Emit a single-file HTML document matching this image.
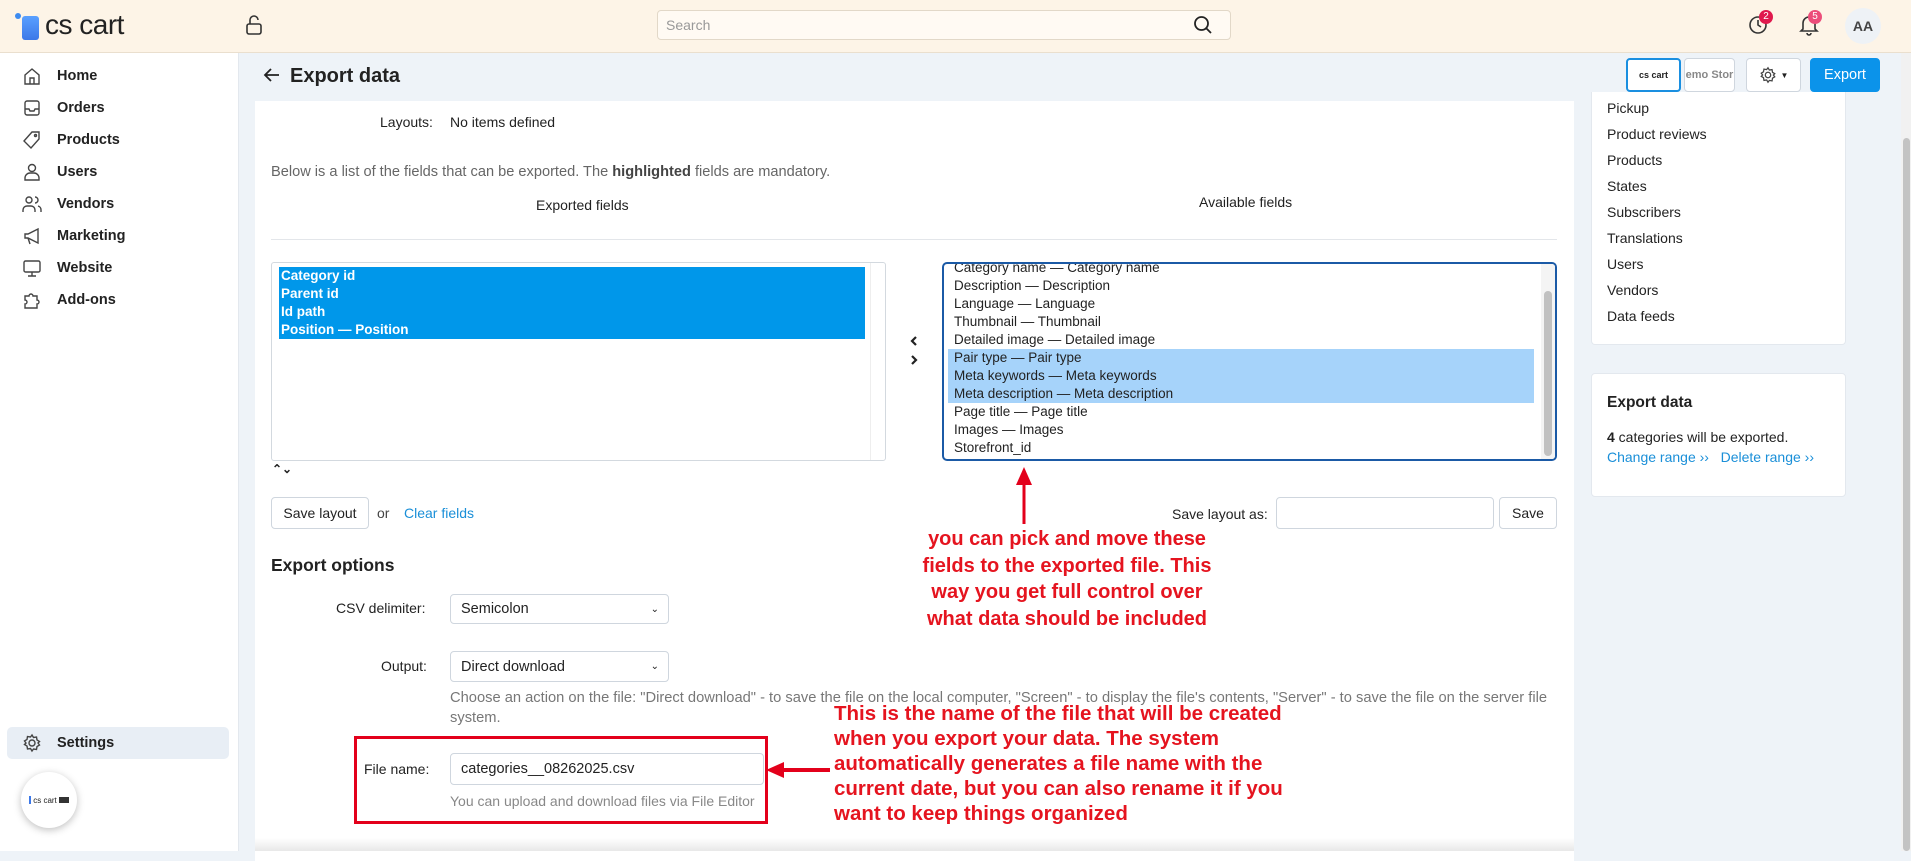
<!DOCTYPE html>
<html><head><meta charset="utf-8"><style>
*{box-sizing:border-box;margin:0;padding:0}
body{width:1911px;height:851px;overflow:hidden;background:#eef3f8;font-family:"Liberation Sans",sans-serif;font-size:13px;color:#222;position:relative}
.a{position:absolute}
.hdr{left:0;top:0;width:1911px;height:53px;background:#fdf4e7;border-bottom:1px solid #eadfce}
.side{left:0;top:53px;width:239px;height:798px;background:#fff;border-right:1px solid #e3e8ee}
.mi{position:absolute;left:0;width:239px;height:32px;display:flex;align-items:center;font-size:14.5px;font-weight:bold;color:#222}
.mi svg{position:absolute;left:22px}
.mi span{position:absolute;left:57px}
.panel{left:255px;top:101px;width:1319px;height:760px;background:#fff}
.rp{background:#fff;border:1px solid #e3e8ee;border-radius:4px}
.btn{background:#fff;border:1px solid #cfd6de;border-radius:4px;display:flex;align-items:center;justify-content:center;font-size:14px}
.inp{background:#fff;border:1px solid #cfd6de;border-radius:4px;font-size:14.5px;display:flex;align-items:center;padding-left:10px}
.red{color:#e5141f;font-weight:bold;font-size:20px;line-height:26px}
.rowL{height:18px;line-height:18px;padding-left:2px;font-weight:bold;color:#fff;font-size:13.5px}
.rowR{height:18px;line-height:18px;padding-left:6px;font-size:13.5px;color:#222}
</style></head><body>
<div class="a hdr">
 <div class="a" style="left:15px;top:13px;width:6px;height:6px;border-radius:50%;background:#3d8bf0"></div>
 <div class="a" style="left:22px;top:16px;width:17px;height:24px;border-radius:3px;background:linear-gradient(#5aa0ff,#3c78e8)"></div>
 <div class="a" style="left:45px;top:9px;font-size:28px;color:#222;letter-spacing:-0.5px">cs cart</div>
 <svg class="a" style="left:245px;top:14px" width="18" height="22" viewBox="0 0 18 22" fill="none" stroke="#333" stroke-width="1.6"><rect x="2" y="10" width="14" height="10" rx="2"/><path d="M5 10V6a4 4 0 0 1 8 0"/></svg>
 <div class="a inp" style="left:657px;top:10px;width:574px;height:30px;color:#999;font-size:14px;padding-left:8px;border-color:#e2d8c8;background:#fffaf3">Search</div>
 <svg class="a" style="left:1193px;top:15px" width="20" height="20" viewBox="0 0 20 20" fill="none" stroke="#222" stroke-width="1.8"><circle cx="8.5" cy="8.5" r="6.5"/><path d="M13.5 13.5L18 18"/></svg>
 <svg class="a" style="left:1748px;top:15px" width="20" height="20" viewBox="0 0 20 20" fill="none" stroke="#333" stroke-width="1.6"><circle cx="10" cy="10" r="8"/><path d="M10 5v5l3 2"/></svg>
 <div class="a" style="left:1759px;top:10px;width:14px;height:14px;border-radius:50%;background:#e0194d;color:#fff;font-size:10px;text-align:center;line-height:14px">2</div>
 <svg class="a" style="left:1799px;top:14px" width="20" height="22" viewBox="0 0 20 22" fill="none" stroke="#333" stroke-width="1.6"><path d="M4 15V9a6 6 0 0 1 12 0v6l2 2H2z"/><path d="M8 19a2 2 0 0 0 4 0"/></svg>
 <div class="a" style="left:1808px;top:10px;width:14px;height:14px;border-radius:50%;background:#ec4d7a;color:#fff;font-size:10px;text-align:center;line-height:14px">5</div>
 <div class="a" style="left:1845px;top:8px;width:36px;height:36px;border-radius:50%;background:#eef2f6;color:#444;font-size:14px;font-weight:bold;text-align:center;line-height:36px">AA</div>
</div>
<div class="a side">
 <div class="mi" style="top:7px"><svg width="20" height="20" viewBox="0 0 20 20" fill="none" stroke="#444" stroke-width="1.4"><path d="M3 9l7-6 7 6v9H3z"/><path d="M8 18v-6h4v6"/></svg><span>Home</span></div>
 <div class="mi" style="top:39px"><svg width="20" height="20" viewBox="0 0 20 20" fill="none" stroke="#444" stroke-width="1.4"><rect x="3" y="3" width="14" height="14" rx="2"/><path d="M3 11h4l1 2h4l1-2h4"/></svg><span>Orders</span></div>
 <div class="mi" style="top:71px"><svg width="20" height="20" viewBox="0 0 20 20" fill="none" stroke="#444" stroke-width="1.4"><path d="M10 2h7v7l-8 9-7-7z"/><circle cx="13.5" cy="5.5" r="1"/></svg><span>Products</span></div>
 <div class="mi" style="top:103px"><svg width="20" height="20" viewBox="0 0 20 20" fill="none" stroke="#444" stroke-width="1.4"><circle cx="10" cy="6" r="3.5"/><path d="M3 18v-2a5 5 0 0 1 5-5h4a5 5 0 0 1 5 5v2z"/></svg><span>Users</span></div>
 <div class="mi" style="top:135px"><svg width="20" height="20" viewBox="0 0 20 20" fill="none" stroke="#444" stroke-width="1.4"><circle cx="7" cy="6" r="3"/><path d="M1 18v-2a4 4 0 0 1 4-4h4a4 4 0 0 1 4 4v2M13 3a3 3 0 0 1 0 6M16 12a4 4 0 0 1 3 4v2"/></svg><span>Vendors</span></div>
 <div class="mi" style="top:167px"><svg width="20" height="20" viewBox="0 0 20 20" fill="none" stroke="#444" stroke-width="1.4"><path d="M3 8h3l10-5v14L6 12H3z"/><path d="M6 12l2 6"/></svg><span>Marketing</span></div>
 <div class="mi" style="top:199px"><svg width="20" height="20" viewBox="0 0 20 20" fill="none" stroke="#444" stroke-width="1.4"><rect x="2" y="3" width="16" height="11" rx="1.5"/><path d="M10 14v4M6 18h8"/></svg><span>Website</span></div>
 <div class="mi" style="top:231px"><svg width="20" height="20" viewBox="0 0 20 20" fill="none" stroke="#444" stroke-width="1.4"><path d="M3 6h4a2 2 0 1 1 4 0h4v4a2 2 0 1 1 0 4v4H3v-4a2 2 0 1 0 0-4z"/></svg><span>Add-ons</span></div>
 <div class="a" style="left:7px;top:674px;width:222px;height:32px;background:#e8eef5;border-radius:5px"></div>
 <div class="mi" style="top:674px"><svg width="20" height="20" viewBox="0 0 20 20" fill="none" stroke="#444" stroke-width="1.4"><circle cx="10" cy="10" r="3"/><path d="M10 2l1.5 2.5 3-.5.5 3L17.5 8.5 16 10l1.5 2-2.5 1.5-.5 3-3-.5L10 18l-1.5-2.5-3 .5-.5-3L2.5 11.5 4 10 2.5 8l2.5-1.5.5-3 3 .5z"/></svg><span>Settings</span></div>
 <div class="a" style="left:21px;top:719px;width:56px;height:56px;border-radius:50%;background:#fff;box-shadow:0 2px 8px rgba(0,0,0,.25);font-size:8px;display:flex;align-items:center;justify-content:center"><span style="display:inline-block;width:2px;height:8px;background:#3c78e8;margin-right:2px"></span>cs cart <span style="display:inline-block;width:10px;height:6px;background:#333;margin-left:2px"></span></div>
</div>
<svg class="a" style="left:263px;top:67px" width="18" height="16" viewBox="0 0 18 16" fill="none" stroke="#222" stroke-width="1.8"><path d="M16 8H2M8 2L2 8l6 6"/></svg>
<div class="a" style="left:290px;top:65px;font-size:20px;font-weight:bold;color:#222">Export data</div>
<div class="a btn" style="left:1626px;top:58px;width:55px;height:34px;border:2px solid #1a8fe0;font-size:9px;font-weight:bold">cs cart</div>
<div class="a btn" style="left:1684px;top:58px;width:51px;height:34px;font-size:11px;color:#888;font-weight:bold;overflow:hidden">emo Stor</div>
<div class="a btn" style="left:1746px;top:58px;width:55px;height:34px">
 <svg width="18" height="18" viewBox="0 0 20 20" fill="none" stroke="#444" stroke-width="1.4"><circle cx="10" cy="10" r="3"/><path d="M10 2l1.5 2.5 3-.5.5 3L17.5 8.5 16 10l1.5 2-2.5 1.5-.5 3-3-.5L10 18l-1.5-2.5-3 .5-.5-3L2.5 11.5 4 10 2.5 8l2.5-1.5.5-3 3 .5z"/></svg><span style="font-size:8px;margin-left:4px">▼</span></div>
<div class="a btn" style="left:1810px;top:58px;width:70px;height:34px;background:#0b93ea;border-color:#0b93ea;color:#fff;font-size:14.5px">Export</div>

<div class="a panel"></div>
<div class="a rp" style="left:1591px;top:92px;width:255px;height:253px;border-top:none;border-radius:0 0 4px 4px"></div>
<div class="a" style="left:1607px;top:95px;font-size:14px;line-height:26px;color:#222">Pickup<br>Product reviews<br>Products<br>States<br>Subscribers<br>Translations<br>Users<br>Vendors<br>Data feeds</div>
<div class="a rp" style="left:1591px;top:373px;width:255px;height:124px"></div>
<div class="a" style="left:1607px;top:394px;font-size:15.5px;font-weight:bold">Export data</div>
<div class="a" style="left:1607px;top:429px;font-size:14px"><b>4</b> categories will be exported.</div>
<div class="a" style="left:1607px;top:449px;font-size:14px;color:#1a8fd8">Change range ›› &nbsp;&nbsp;Delete range ››</div>
<div class="a" style="left:1901px;top:53px;width:10px;height:798px;background:#f1f1f1"></div>
<div class="a" style="left:1903px;top:138px;width:7px;height:713px;background:#c3c3c3;border-radius:4px"></div>

<div class="a" style="left:380px;top:114px;font-size:14px">Layouts:</div>
<div class="a" style="left:450px;top:114px;font-size:14px">No items defined</div>
<div class="a" style="left:271px;top:164px;font-size:14.6px;color:#666">Below is a list of the fields that can be exported. The <b style="color:#444">highlighted</b> fields are mandatory.</div>
<div class="a" style="left:536px;top:197px;font-size:14px">Exported fields</div>
<div class="a" style="left:1199px;top:194px;font-size:14px">Available fields</div>
<div class="a" style="left:271px;top:239px;width:1286px;height:1px;background:#e3e6ea"></div>

<div class="a" style="left:271px;top:262px;width:615px;height:199px;border:1px solid #d3d9df;border-radius:3px"></div>
<div class="a" style="left:870px;top:263px;width:15px;height:197px;border-left:1px solid #eee"></div>
<div class="a" style="left:279px;top:267px;width:586px;background:#0097ea">
 <div class="rowL">Category id</div><div class="rowL">Parent id</div><div class="rowL">Id path</div><div class="rowL">Position — Position</div></div>
<div class="a" style="left:272px;top:462px;font-size:12px;font-weight:bold">⌃⌄</div>
<svg class="a" style="left:908px;top:334px" width="12" height="34" viewBox="0 0 12 34" fill="none" stroke="#222" stroke-width="2.2"><path d="M8 3L4 7l4 4M4 22l4 4-4 4"/></svg>

<div class="a" style="left:942px;top:262px;width:615px;height:199px;border:2px solid #1b5aa6;border-radius:5px;overflow:hidden">
 <div style="position:absolute;left:4px;top:-5px;width:586px">
  <div class="rowR">Category name — Category name</div><div class="rowR">Description — Description</div><div class="rowR">Language — Language</div><div class="rowR">Thumbnail — Thumbnail</div><div class="rowR">Detailed image — Detailed image</div>
  <div class="rowR" style="background:#a6d3fa">Pair type — Pair type</div><div class="rowR" style="background:#a6d3fa">Meta keywords — Meta keywords</div><div class="rowR" style="background:#a6d3fa">Meta description — Meta description</div>
  <div class="rowR">Page title — Page title</div><div class="rowR">Images — Images</div><div class="rowR">Storefront_id</div></div>
 <div style="position:absolute;right:0;top:0;width:14px;height:195px;background:#f4f4f4"></div>
 <div style="position:absolute;right:3px;top:27px;width:8px;height:165px;background:#c1c1c1;border-radius:4px"></div>
</div>

<div class="a btn" style="left:271px;top:497px;width:98px;height:32px">Save layout</div>
<div class="a" style="left:377px;top:505px;font-size:14px;color:#444">or</div>
<div class="a" style="left:404px;top:505px;font-size:14px;color:#1a8fd8">Clear fields</div>
<div class="a" style="left:1172px;top:506px;font-size:14px">Save layout as:</div>
<div class="a inp" style="left:1276px;top:497px;width:218px;height:32px"></div>
<div class="a btn" style="left:1499px;top:497px;width:58px;height:32px">Save</div>

<div class="a" style="left:271px;top:555px;font-size:17.5px;font-weight:bold">Export options</div>
<div class="a" style="left:336px;top:600px;font-size:14px">CSV delimiter:</div>
<div class="a inp" style="left:450px;top:594px;width:219px;height:30px">Semicolon<span style="position:absolute;right:9px;font-size:10px">⌄</span></div>
<div class="a" style="left:381px;top:658px;font-size:14px">Output:</div>
<div class="a inp" style="left:450px;top:651px;width:219px;height:31px">Direct download<span style="position:absolute;right:9px;font-size:10px">⌄</span></div>
<div class="a" style="left:450px;top:688px;width:1110px;font-size:14.7px;line-height:20px;color:#777">Choose an action on the file: "Direct download" - to save the file on the local computer, "Screen" - to display the file's contents, "Server" - to save the file on the server file system.</div>
<div class="a" style="left:364px;top:761px;font-size:14px">File name:</div>
<div class="a inp" style="left:450px;top:753px;width:314px;height:32px">categories__08262025.csv</div>
<div class="a" style="left:450px;top:793px;font-size:14px;color:#888">You can upload and download files via File Editor</div>
<div class="a" style="left:354px;top:736px;width:414px;height:88px;border:3px solid #e3001b"></div>
<svg class="a" style="left:764px;top:760px" width="66" height="20" viewBox="0 0 66 20"><path d="M66 10H18" stroke="#e3001b" stroke-width="4"/><path d="M2 10l18-8v16z" fill="#e3001b"/></svg>
<svg class="a" style="left:1014px;top:466px" width="20" height="58" viewBox="0 0 20 58"><path d="M10 58V16" stroke="#e3001b" stroke-width="3"/><path d="M10 1l8 18H2z" fill="#e3001b"/></svg>

<div class="a red" style="left:900px;top:526px;width:334px;text-align:center;line-height:26.5px">you can pick and move these<br>fields to the exported file. This<br>way you get full control over<br>what data should be included</div>
<div class="a red" style="left:834px;top:701px;line-height:25px;font-size:20.5px">This is the name of the file that will be created<br>when you export your data. The system<br>automatically generates a file name with the<br>current date, but you can also rename it if you<br>want to keep things organized</div>
<div class="a" style="left:255px;top:838px;width:1319px;height:13px;background:linear-gradient(#fff,#e8e8e8)"></div>
</body></html>
